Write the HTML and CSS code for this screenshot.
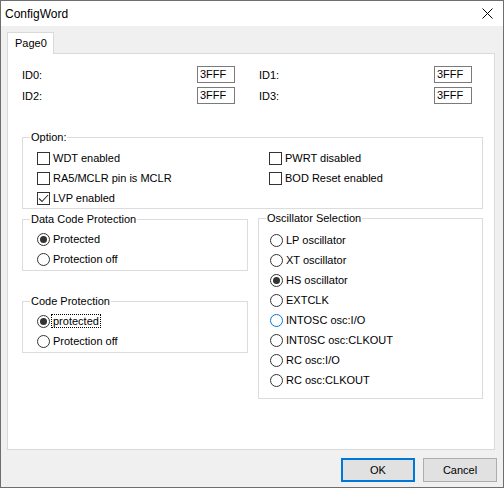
FILE: index.html
```html
<!DOCTYPE html>
<html>
<head>
<meta charset="utf-8">
<link rel="stylesheet" href="styles.css">
</head>
<body>
<div class="window">
  <div class="titlebar">
    <span class="title">ConfigWord</span>
    <svg class="close" width="11" height="11" viewBox="0 0 11 11"><path d="M0.5 0.5L10.5 10.5M10.5 0.5L0.5 10.5" stroke="#000" stroke-width="1" fill="none"/></svg>
  </div>
  <div class="client">
    <div class="tabs"><div class="tab">Page0</div></div>
    <div class="panel">
      <div class="ids">
        <span class="lbl">ID0:</span><span class="edit">3FFF</span><span></span><span class="lbl">ID1:</span><span class="edit">3FFF</span>
        <span class="lbl">ID2:</span><span class="edit">3FFF</span><span></span><span class="lbl">ID3:</span><span class="edit">3FFF</span>
      </div>
      <div class="group option">
        <span class="gtitle">Option:</span>
        <div class="optgrid">
          <div class="item"><span class="check"></span><span class="text">WDT enabled</span></div>
          <div class="item"><span class="check"></span><span class="text">RA5/MCLR pin is MCLR</span></div>
          <div class="item"><span class="check"><svg width="11" height="11" viewBox="0 0 11 11"><polyline points="1,5.5 4,8.5 10,2" fill="none" stroke="#333" stroke-width="1.1"/></svg></span><span class="text">LVP enabled</span></div>
          <div class="item"><span class="check"></span><span class="text">PWRT disabled</span></div>
          <div class="item"><span class="check"></span><span class="text">BOD Reset enabled</span></div>
        </div>
      </div>
      <div class="lower">
        <div class="leftcol">
          <div class="group small">
            <span class="gtitle">Data Code Protection</span>
            <div class="item"><span class="radio on"></span><span class="text">Protected</span></div>
            <div class="item"><span class="radio"></span><span class="text">Protection off</span></div>
          </div>
          <div class="group small code">
            <span class="gtitle">Code Protection</span>
            <div class="item"><span class="radio on"></span><span class="text focus">protected</span></div>
            <div class="item"><span class="radio"></span><span class="text">Protection off</span></div>
          </div>
        </div>
        <div class="group osc">
          <span class="gtitle">Oscillator Selection</span>
          <div class="item"><span class="radio"></span><span class="text">LP oscillator</span></div>
          <div class="item"><span class="radio"></span><span class="text">XT oscillator</span></div>
          <div class="item"><span class="radio on"></span><span class="text">HS oscillator</span></div>
          <div class="item"><span class="radio"></span><span class="text">EXTCLK</span></div>
          <div class="item"><span class="radio hover"></span><span class="text">INTOSC osc:I/O</span></div>
          <div class="item"><span class="radio"></span><span class="text">INT0SC osc:CLKOUT</span></div>
          <div class="item"><span class="radio"></span><span class="text">RC osc:I/O</span></div>
          <div class="item"><span class="radio"></span><span class="text">RC osc:CLKOUT</span></div>
        </div>
      </div>
    </div>
    <div class="buttons">
      <button class="btn default">OK</button>
      <button class="btn">Cancel</button>
    </div>
  </div>
</div>
</body>
</html>
```
FILE: styles.css
```css
html, body {
  margin: 0;
  padding: 0;
  background: #f0f0f0;
}
body {
  font-family: "Liberation Sans", Arial, sans-serif;
  font-size: 11px;
  color: #000;
}
.window {
  width: 504px;
  height: 488px;
  box-sizing: border-box;
  border: 1px solid #6e6e6e;
  background: #f0f0f0;
  display: flex;
  flex-direction: column;
}
.titlebar {
  height: 25px;
  background: #fff;
  display: flex;
  align-items: center;
  justify-content: space-between;
  padding-left: 4px;
  flex: none;
}
.title {
  font-size: 12px;
  line-height: 14px;
}
.close {
  margin-right: 10px;
}
.client {
  flex: 1;
  padding: 6px 6px 0 6px;
}
.tabs {
  display: flex;
  height: 21px;
}
.tab {
  position: relative;
  z-index: 1;
  background: #fff;
  border: 1px solid #d9d9d9;
  border-bottom: none;
  height: 21px;
  padding: 0 6px 0 7px;
  line-height: 21px;
}
.panel {
  width: 488px;
  height: 397px;
  box-sizing: border-box;
  background: #fff;
  border: 1px solid #d9d9d9;
  padding: 12px 0 0 14px;
}
.ids {
  display: grid;
  grid-template-columns: 175px 38px 24px 175px 38px;
  grid-template-rows: 17px 17px;
  row-gap: 4px;
  align-items: center;
}
.edit {
  height: 17px;
  box-sizing: border-box;
  border: 1px solid #7a7a7a;
  padding-left: 2px;
  line-height: 15px;
  background: #fff;
}
.group {
  position: relative;
  border: 1px solid #dcdcdc;
  box-sizing: border-box;
}
.gtitle {
  position: absolute;
  top: -8px;
  left: 7px;
  padding: 0 1px;
  line-height: 14px;
  background: #fff;
  white-space: nowrap;
}
.option {
  width: 461px;
  margin-top: 33px;
  padding: 10px 0 0 14px;
  height: 72px;
}
.optgrid {
  display: grid;
  grid-template-columns: 232px 1fr;
  grid-template-rows: repeat(3, 20px);
  grid-auto-flow: column;
}
.item {
  display: flex;
  align-items: center;
  height: 20px;
  gap: 1px;
}
.text {
  line-height: 12px;
  padding: 0 1px;
  border: 1px dotted transparent;
  white-space: nowrap;
}
.text.focus {
  border-color: #000;
}
.check {
  width: 13px;
  height: 13px;
  box-sizing: border-box;
  border: 1px solid #333;
  background: #fff;
  margin-right: 0;
  display: flex;
  align-items: center;
  justify-content: center;
  flex: none;
}
.check svg {
  display: block;
}
.radio {
  width: 13px;
  height: 13px;
  box-sizing: border-box;
  border: 1px solid #333;
  border-radius: 50%;
  background: #fff;
  display: flex;
  align-items: center;
  justify-content: center;
  flex: none;
}
.radio.on::after {
  content: "";
  width: 7px;
  height: 7px;
  border-radius: 50%;
  background: #333;
}
.radio.hover {
  border-color: #0078d7;
}
.lower {
  display: flex;
  gap: 10px;
  margin-top: 10px;
  width: 461px;
  align-items: flex-start;
}
.leftcol {
  width: 226px;
  display: flex;
  flex-direction: column;
}
.small {
  width: 226px;
  height: 52px;
  padding: 9px 0 0 14px;
}
.code {
  margin-top: 30px;
}
.osc {
  width: 225px;
  height: 181px;
  margin-top: -1px;
  padding: 11px 0 0 11px;
}
.buttons {
  display: flex;
  justify-content: flex-end;
  gap: 8px;
  margin-top: 8px;
}
.btn {
  width: 74px;
  height: 24px;
  box-sizing: border-box;
  background: #e1e1e1;
  border: 1px solid #adadad;
  font-family: "Liberation Sans", Arial, sans-serif;
  font-size: 11px;
  color: #000;
  padding: 0;
  margin: 0;
}
.btn.default {
  border: 1px solid #0078d7;
  box-shadow: inset 0 0 0 1px #0078d7;
}
```
